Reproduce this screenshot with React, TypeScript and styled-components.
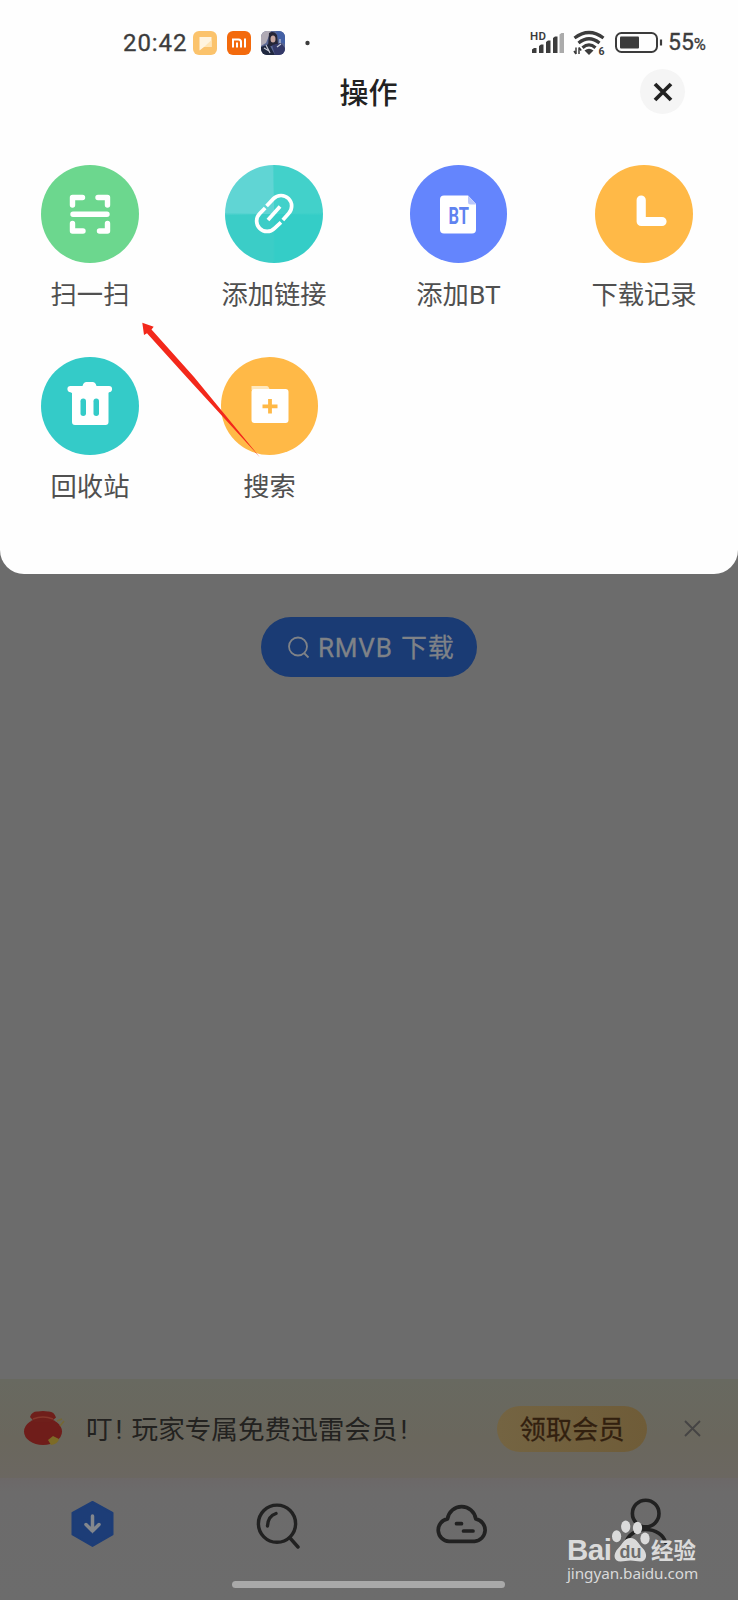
import React from "react";
import styled, { createGlobalStyle } from "styled-components";

const GlobalStyle = createGlobalStyle`
  * { box-sizing: border-box; }
  body {
    margin: 0;
    background: #6c6c6c;
    font-family: Roboto, "Noto Sans CJK SC", sans-serif;
  }
  svg { display: block; flex: none; overflow: visible; }
`;

const Screen = styled.div`
  position: relative;
  width: 738px;
  height: 1600px;
  overflow: hidden;
  display: flex;
  flex-direction: column;
  background: #6c6c6c;
`;

const Sheet = styled.section`
  position: relative;
  height: 574px;
  flex: none;
  background: #fefefe;
  border-radius: 0 0 24px 24px;
`;

const StatusBar = styled.div`
  padding: 22px 0 0 123px;
  display: flex;
  align-items: center;
  height: 63px;
  color: #3c3c3c;
`;

const Clock = styled.span`
  width: 70px;
  font-size: 24px;
  letter-spacing: 0.9px;
  line-height: 40px;
  -webkit-text-stroke: 0.3px #3c3c3c;
`;

const AppIcons = styled.div`
  display: flex;
  gap: 10px;
  width: 337px;
`;

const Battery = styled.span`
  margin-left: 4px;
  padding-top: 3px;
  font-size: 23px;
  line-height: 40px;
  -webkit-text-stroke: 0.3px #3c3c3c;
  small { font-size: 16.5px; }
`;

const SystemIcons = styled.div`
  display: flex;
  align-items: center;
`;

const Header = styled.header`
  height: 102px;
  padding: 6px 53px 0 0;
  display: grid;
  grid-template-columns: 97px 1fr 45px;
  align-items: start;
`;

const Title = styled.h1`
  margin: 0;
  padding-top: 2px;
  text-align: center;
  grid-column: 2;
  font-size: 29px;
  line-height: 46px;
  font-weight: 500;
  color: #222;
`;

const CloseButton = styled.button`
  width: 45px;
  height: 45px;
  padding: 0;
  border: 0;
  border-radius: 50%;
  background: #f5f5f5;
  display: grid;
  place-items: center;
`;

const TileRow = styled.div<{ $columns: string }>`
  display: grid;
  grid-template-columns: ${(p) => p.$columns};
  padding-left: 30px;
  height: 192.4px;
`;

const Tile = styled.div`
  width: 120px;
  display: flex;
  flex-direction: column;
  align-items: center;
`;

const Disc = styled.div<{ $fill: string }>`
  width: 97.5px;
  height: 98px;
  border-radius: 50%;
  background: ${(p) => p.$fill};
`;

const Label = styled.span`
  margin-top: 12px;
  font-size: 26.3px;
  line-height: 40px;
  color: #505050;
  white-space: nowrap;
`;

const ArrowLayer = styled.svg`
  position: absolute;
  left: 140px;
  top: 320px;
`;

const Body = styled.main`
  flex: 1;
  padding-top: 43px;
  display: flex;
  justify-content: center;
  align-items: flex-start;
`;

const SearchPill = styled.div`
  width: 216px;
  height: 60px;
  border-radius: 30px;
  padding: 2px 0 0 27px;
  display: flex;
  align-items: center;
  gap: 8px;
  background: #1a3b74;
  color: #7f8287;
  font-size: 26px;
  line-height: 60px;
  white-space: nowrap;
`;

const SearchTerm = styled.span`
  letter-spacing: 0.8px;
  word-spacing: 1px;
  -webkit-text-stroke: 0.3px #7f8287;
`;

const Promo = styled.div`
  height: 99px;
  flex: none;
  padding: 0 36px 0 23px;
  display: flex;
  align-items: center;
  background: linear-gradient(#686960, #6a675d 60%, #6b6761);
`;

const PromoText = styled.span`
  margin-left: 20px;
  padding-top: 2px;
  width: 411px;
  display: flex;
  font-size: 26.6px;
  line-height: 40px;
  color: #232220;
`;

const Bang = styled.span<{ $width: number }>`
  width: ${(p) => p.$width}px;
  padding-left: 3px;
`;

const ClaimButton = styled.div`
  width: 150px;
  height: 46px;
  border-radius: 23px;
  background: linear-gradient(90deg, #746442, #6f5c38);
  color: #32200f;
  font-size: 26.3px;
  line-height: 48px;
  text-align: center;
  -webkit-text-stroke: 0.3px #32200f;
`;

const Dismiss = styled.div`
  margin-left: 37px;
`;

const NavBar = styled.nav`
  height: 122px;
  flex: none;
  background: linear-gradient(#6c6868, #6c6b6b 14px, #6c6c6c);
`;

const NavItems = styled.div`
  height: 103px;
  padding: 18px 67px 0 67px;
  display: grid;
  grid-template-columns: 184px 181px 184px 54px;
`;

const HomeBar = styled.div`
  width: 273px;
  height: 7px;
  margin: 0 0 0 232px;
  border-radius: 4px;
  background: #a9a9a9;
`;

const Watermark = styled.div`
  position: absolute;
  left: 567px;
  top: 1518px;
  width: 134px;
  color: #dadada;
`;

const WatermarkLogo = styled.div`
  height: 46px;
  display: flex;
  align-items: flex-end;
`;

const WatermarkLatin = styled.span`
  width: 45px;
  font: 700 29.5px/29px "Liberation Sans", sans-serif;
  letter-spacing: -0.5px;
`;

const WatermarkHan = styled.span`
  font: 700 22.5px/30px "Noto Sans CJK SC", sans-serif;
  margin-left: -1px;
`;

const WatermarkUrl = styled.div`
  font: 15.3px/18px "Noto Sans", sans-serif;
  letter-spacing: -0.08px;
  white-space: nowrap;
`;

const ScanIcon = () => (
  <svg width="98" height="98" fill="none" stroke="#fff" strokeWidth="5.4" strokeLinecap="round" strokeLinejoin="round">
    <path d="M31.5 40v-7.500h10M57 32.500h9.500v7.500M31.500 58.500v7.500h10.500M58.500 66h8v-7.500M32 49.300h34" />
  </svg>
);

const LinkIcon = () => (
  <svg width="98" height="98" fill="none" stroke="#fff" strokeWidth="4">
    <g transform="translate(49 48.700) scale(.93) translate(-49 -48.700)">
      <path d="M41 40.500L48.500 32.500A11.200 11.200 0 0 1 64.700 48.500L58.500 55.500" />
      <path d="M56.500 58L49.500 64.500A11.200 11.200 0 0 1 33.600 48.600L39.500 42.500" />
      <path d="M42.500 55.500L55.500 41" />
    </g>
  </svg>
);

const BtIcon = () => (
  <svg width="98" height="98">
    <path d="M34 30.500H58L66 39V64.500a4 4 0 0 1-4 4H34a4 4 0 0 1-4-4V34.500a4 4 0 0 1 4-4Z" fill="#fff" />
    <path d="M58 30.500L66 39.500H60.500a2.500 2.500 0 0 1-2.500-2.500Z" fill="#bac7fb" />
    <text transform="translate(38.600 59) scale(.7 1)" fontFamily="Roboto, sans-serif" fontWeight="700" fontSize="23.500" fill="#6083f0">BT</text>
  </svg>
);

const ClockIcon = () => (
  <svg width="98" height="98" fill="none" stroke="#fff" strokeWidth="9.200" strokeLinecap="round" strokeLinejoin="round">
    <path d="M46.200 35V56.500H67" />
  </svg>
);

const TrashIcon = () => (
  <svg width="98" height="98" fill="#fff">
    <path d="M29.500 29h12q1-4 4-4h6q3 0 4 4h12.500a3 3 0 0 1 0 6.200l-.5.8V65a3 3 0 0 1-3 3H34a3 3 0 0 1-3-3V36l-1.500-.8a3.100 3.100 0 0 1 0-6.200Z" />
    <rect x="39.500" y="41.500" width="5.500" height="17.500" rx="2.700" fill="#34cbc8" />
    <rect x="52.500" y="41.500" width="5.500" height="17.500" rx="2.700" fill="#34cbc8" />
  </svg>
);

const FolderIcon = () => (
  <svg width="98" height="98">
    <path d="M30.500 29h15q1.500 0 2 1l1.500 3H30.500Z" fill="#ffe8bd" />
    <rect x="30.500" y="32" width="37" height="34" rx="3" fill="#fff" />
    <path d="M49 42v14.500M41.500 49.300h15" stroke="#ffb947" strokeWidth="3.800" />
  </svg>
);

const firstRow = [
  { label: "扫一扫", fill: "#6cd78e", icon: <ScanIcon /> },
  {
    label: "添加链接",
    fill: "conic-gradient(#42d1ca 0 88deg, #34cdc7 92deg 178deg, #3bcdc7 182deg 268deg, #60d5d4 272deg 358deg, #42d1ca)",
    icon: <LinkIcon />,
  },
  { label: "添加BT", fill: "#6485fd", icon: <BtIcon /> },
  { label: "下载记录", fill: "#ffb947", icon: <ClockIcon /> },
];

const secondRow = [
  { label: "回收站", fill: "#34cbc8", icon: <TrashIcon /> },
  { label: "搜索", fill: "#ffb947", icon: <FolderIcon /> },
];

const Tiles = ({ items, columns }: { items: typeof firstRow; columns: string }) => (
  <TileRow $columns={columns}>
    {items.map((t) => (
      <Tile key={t.label}>
        <Disc $fill={t.fill}>{t.icon}</Disc>
        <Label>{t.label}</Label>
      </Tile>
    ))}
  </TileRow>
);

export default function App() {
  return (
    <Screen>
      <GlobalStyle />
      <Sheet>
        <StatusBar>
          <Clock>20:42</Clock>
          <AppIcons>
            <svg width="24" height="24">
              <rect width="24" height="24" rx="6" fill="#fbc36c" />
              <path d="M6.500 6H18.500V16H11L6.500 19.500Z" fill="#fff4df" />
              <path d="M18.500 9V16H11Z" fill="#ffe5b5" />
            </svg>
            <svg width="24" height="24" fill="none" stroke="#fff" strokeWidth="2">
              <rect width="24" height="24" rx="6" fill="#f36a0d" stroke="none" />
              <path d="M6 16.500V8.500h5.500q2.500 0 2.500 2.500v5.500M10 11.500V16.500M18 7.500V16.500" />
            </svg>
            <svg width="24" height="24">
              <defs>
                <clipPath id="avatar"><rect width="24" height="24" rx="6" /></clipPath>
              </defs>
              <g clipPath="url(#avatar)">
                <rect width="24" height="24" fill="#5a6794" />
                <path d="M0 0H10L5 12 0 15Z" fill="#b0aab4" />
                <path d="M15 0h9v13l-6-2Z" fill="#4360a5" />
                <path d="M8 2q5-3 8 2l1 9-10 3Z" fill="#252537" />
                <ellipse cx="12" cy="8" rx="2.500" ry="3.500" fill="#c7a6a0" />
                <path d="M0 16L8 13l6 11H0Z" fill="#20283f" />
                <path d="M11 14l9-2 4 5v7H14Z" fill="#343968" />
                <path d="M3 17l5 3M5 14l4 8M16 16l4-3M19 8v4" stroke="#c6c8d5" strokeWidth="1.200" />
              </g>
            </svg>
            <svg width="30" height="24"><circle cx="12.500" cy="12" r="2.200" fill="#3c3c3c" /></svg>
          </AppIcons>
          <SystemIcons>
            <svg width="36" height="26" fill="#3c3c3c">
              <text x="0" y="10" fontFamily="Roboto, sans-serif" fontSize="11.500" fontWeight="600" textLength="16">HD</text>
              <path d="M2 19.500l2-1.500h2.500v5H2ZM9 16l2-1.500h2.500V23H9ZM16 12l2-1.500h2.500V23H16ZM23 8l2-1.500h2.500V23H23Z" />
              <path d="M29.500 4.500l2-1.500H34V23h-4.500Z" fill="#ababab" />
            </svg>
            <svg width="40" height="30" fill="none" stroke="#3c3c3c" strokeWidth="3.200">
              <g transform="translate(0 2)">
                <path d="M8.500 8Q23-3 37.500 8M12.500 13Q23 4.500 33.500 13M16.500 17.800Q23 12 29.500 17.800" />
                <path d="M18.500 20.500Q23 17 27.500 20.500L23 25Z" fill="#3c3c3c" stroke="none" />
                <path d="M10 17.500v6.500M13 17.500v6.500M8 21L10 24M13 17.500l2.200 3" strokeWidth="1.500" />
                <text x="32.500" y="24.500" fontFamily="Roboto, sans-serif" fontSize="10.500" fontWeight="700" fill="#3c3c3c" stroke="none">6</text>
              </g>
            </svg>
            <svg width="58" height="26" fill="none" stroke="#3c3c3c" strokeWidth="2">
              <rect x="10" y="3" width="41" height="19" rx="5.500" />
              <rect x="14" y="6.500" width="19" height="12" rx="1" fill="#3c3c3c" stroke="none" />
              <path d="M55 9.500v6" strokeWidth="2.200" />
            </svg>
          </SystemIcons>
          <Battery>55<small>%</small></Battery>
        </StatusBar>
        <Header>
          <Title>操作</Title>
          <CloseButton aria-label="关闭">
            <svg width="20" height="20" stroke="#222" strokeWidth="3.800"><path d="M2 2L18 18M18 2L2 18" /></svg>
          </CloseButton>
        </Header>
        <Tiles items={firstRow} columns="184px 184.5px 185.5px 120px" />
        <Tiles items={secondRow} columns="179.5px 120px" />
        <ArrowLayer width="122" height="140">
          <path d="M2.300 2.700L13.700 6.700 11.500 9.500 54 57 120 137.500 46.500 57 7 13.200 4 15Z" fill="#f3281b" />
        </ArrowLayer>
      </Sheet>
      <Body>
        <SearchPill>
          <svg width="22" height="22" fill="none" stroke="#7f8287" strokeWidth="1.800">
            <circle cx="10" cy="9.500" r="9" /><path d="M16 16L20.500 20.500" />
          </svg>
          <SearchTerm>RMVB 下载</SearchTerm>
        </SearchPill>
      </Body>
      <Promo>
        <svg width="43" height="40">
          <ellipse cx="20" cy="22.500" rx="19" ry="13.500" fill="#6f1d1a" />
          <path d="M7 8q2-6 8-5.500 5-1 10 0 6-.5 8 6l-6 5H12Z" fill="#6f1f1b" />
          <path d="M10 10q10-4 20 0" fill="none" stroke="#86382c" strokeWidth="1.500" />
          <path d="M25 31l5-4 6 3q-1 5-8 6Z" fill="#7d6b26" />
          <path d="M34 12l5-2M37 17l4-5" stroke="#746836" strokeWidth="1.600" />
        </svg>
        <PromoText>
          叮<Bang $width={19}>!</Bang>玩家专属免费迅雷会员<Bang $width={12}>!</Bang>
        </PromoText>
        <ClaimButton>领取会员</ClaimButton>
        <Dismiss>
          <svg width="17" height="17" stroke="#454444" strokeWidth="1.800"><path d="M1 1L16 16M16 1L1 16" /></svg>
        </Dismiss>
      </Promo>
      <NavBar>
        <NavItems>
          <svg width="52" height="56">
            <path d="M25.500 6L45.500 17V38.500L25.500 50 5.500 38.500V17Z" fill="#1d3d77" stroke="#1d3d77" strokeLinejoin="round" strokeWidth="2" />
            <path d="M25.500 20V35M19 28.500L25.500 35 32 28.500" fill="none" stroke="#83878d" strokeWidth="3.500" strokeLinecap="round" />
          </svg>
          <svg width="54" height="56" fill="none" stroke="#212121" strokeWidth="3.400" strokeLinecap="round">
            <circle cx="26" cy="27.700" r="18.600" />
            <path d="M39 42L47 51M16.500 30Q17 20 25 17.500" />
          </svg>
          <svg width="60" height="56" fill="none" stroke="#212121" strokeWidth="3.700" strokeLinecap="round" strokeLinejoin="round">
            <path d="M17 45.300a11.300 11.300 0 0 1-1.500-22.400a14.300 14.300 0 0 1 28.300 0a11.300 11.300 0 0 1-1.300 22.400Z" />
            <path d="M24.500 27.700h5M31.500 35h9.500" />
          </svg>
          <svg width="54" height="56" fill="none" stroke="#212121" strokeWidth="3.600" strokeLinecap="round">
            <circle cx="29.700" cy="17.500" r="13.300" />
            <path d="M10 46.500a20 15.500 0 0 1 39.500 0" />
          </svg>
        </NavItems>
        <HomeBar />
      </NavBar>
      <Watermark>
        <WatermarkLogo>
          <WatermarkLatin>Bai</WatermarkLatin>
          <svg width="40" height="46" fill="#dadada">
            <ellipse cx="4.600" cy="18.200" rx="4.600" ry="6" />
            <ellipse cx="13.700" cy="8.700" rx="4.600" ry="6.200" />
            <ellipse cx="25.500" cy="10" rx="4.600" ry="6.200" />
            <ellipse cx="33" cy="20.500" rx="4.600" ry="6" />
            <path d="M18.500 20c6 0 8 6 12 10 6 6 4 13.500-2 13.500-4 0-6-1-10-1s-6 1-10 1c-7 0-8-7.500-2-13.500 4-4 6-10 12-10Z" />
            <text x="7.500" y="40" fontFamily="Liberation Sans, sans-serif" fontWeight="700" fontSize="18" fill="#6c6c6c">du</text>
          </svg>
          <WatermarkHan>经验</WatermarkHan>
        </WatermarkLogo>
        <WatermarkUrl>jingyan.baidu.com</WatermarkUrl>
      </Watermark>
    </Screen>
  );
}
